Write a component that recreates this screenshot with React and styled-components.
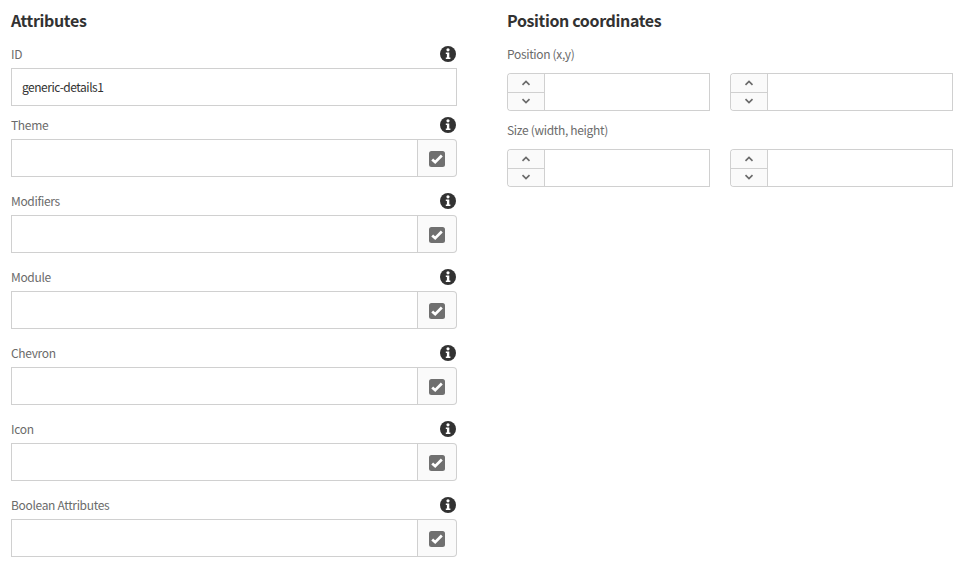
import React from "react";
import styled, { createGlobalStyle } from "styled-components";

const GlobalStyle = createGlobalStyle`
  *, *::before, *::after { box-sizing: border-box; }
  body {
    margin: 0;
    background: #fff;
    color: #323232;
    font-family: "Noto Sans CJK SC", "Open Sans", sans-serif;
    font-size: 12px;
  }
`;

const Page = styled.main`
  display: grid;
  grid-template-columns: 446px 446px;
  column-gap: 50px;
  padding: 10px 13px 0 11px;
`;

const Column = styled.section`
  display: flex;
  flex-direction: column;
`;

const Heading = styled.h3`
  margin: 0 0 16px;
  height: 20px;
  font-size: 16px;
  font-weight: 700;
  line-height: 20px;
  letter-spacing: -0.36px;
  white-space: nowrap;
`;

const Field = styled.div`
  margin-bottom: ${(p) => p.$gap || "16px"};
`;

const LabelRow = styled.div`
  display: flex;
  justify-content: space-between;
  height: 22px;
  padding-right: 1px;
`;

const Label = styled.label`
  height: 15px;
  font-size: 12px;
  line-height: 15px;
  color: #6b6b6b;
  letter-spacing: -0.33px;
  white-space: nowrap;
`;

const InputGroup = styled.div`
  display: flex;
  width: ${(p) => p.$width || "100%"};
  height: 38px;
`;

const TextInput = styled.input`
  flex: 1;
  min-width: 0;
  height: 38px;
  margin: 0;
  padding: 0 10px 1px;
  border: 1px solid #d0d0d0;
  border-radius: 0;
  outline: none;
  background: #fff;
  color: #323232;
  font: inherit;
  letter-spacing: -0.48px;
`;

const Addon = styled.div`
  display: flex;
  align-items: center;
  justify-content: center;
  width: 39px;
  border: 1px solid #d0d0d0;
  border-left: 0;
  border-radius: 0 4px 4px 0;
  background: #fafafa;
`;

const CheckSvg = styled.svg`
  display: block;
  margin-top: 1px;
`;

const InfoSvg = styled.svg`
  display: block;
`;

const Steppers = styled.div`
  display: flex;
  flex-direction: column;
  width: 37px;
  border: 1px solid #d0d0d0;
  border-right: 0;
  border-radius: 4px 0 0 4px;
  overflow: hidden;
`;

const StepButton = styled.button`
  display: flex;
  align-items: center;
  justify-content: center;
  height: ${(p) => (p.$up ? "19px" : "17px")};
  margin: 0;
  padding: ${(p) => (p.$up ? "0" : "0 0 1px")};
  border: 0;
  border-bottom: ${(p) => (p.$up ? "1px solid #d0d0d0" : "0")};
  background: #fafafa;
`;

const SpinnerRow = styled.div`
  display: flex;
  gap: 20px;
  margin-top: 5px;
`;

function InfoIcon() {
  return (
    <InfoSvg width="16" height="16" viewBox="0 0 16 16" aria-hidden="true">
      <circle cx="8" cy="8" r="8" fill="#323232" />
      <circle cx="8" cy="3.8" r="1.6" fill="#fff" />
      <path d="M5.8 6.4h3.5v5.1h1.1V13H5.8v-1.5h1.1V7.9H5.8z" fill="#fff" />
    </InfoSvg>
  );
}

function CheckIcon() {
  return (
    <CheckSvg width="16" height="16" viewBox="0 0 16 16" aria-hidden="true">
      <rect width="16" height="16" rx="2.5" fill="#707070" />
      <path d="M3.2 8.4l3 2.8 6.6-6.7" fill="none" stroke="#fff" strokeWidth="2.7" />
    </CheckSvg>
  );
}

function Chevron({ up }) {
  return (
    <svg width="10" height="6" viewBox="0 0 10 6" aria-hidden="true">
      <path
        d={up ? "M1.5 4.8L5 1.5l3.5 3.3" : "M1.5 1.2L5 4.5l3.5-3.3"}
        fill="none"
        stroke="#6b6b6b"
        strokeWidth="1.7"
      />
    </svg>
  );
}

function AttributeField({ label, value, gap, toggle = true }) {
  return (
    <Field $gap={gap}>
      <LabelRow>
        <Label>{label}</Label>
        <InfoIcon />
      </LabelRow>
      <InputGroup>
        <TextInput type="text" aria-label={label} defaultValue={value} />
        {toggle && (
          <Addon>
            <CheckIcon />
          </Addon>
        )}
      </InputGroup>
    </Field>
  );
}

function NumberSpinner({ width, label }) {
  return (
    <InputGroup $width={width}>
      <Steppers>
        <StepButton $up aria-label="Increase">
          <Chevron up />
        </StepButton>
        <StepButton aria-label="Decrease">
          <Chevron />
        </StepButton>
      </Steppers>
      <TextInput type="text" aria-label={label} />
    </InputGroup>
  );
}

function SpinnerField({ label, names }) {
  return (
    <Field $gap="11px">
      <LabelRow>
        <Label>{label}</Label>
      </LabelRow>
      <SpinnerRow>
        <NumberSpinner width="203px" label={names[0]} />
        <NumberSpinner width="223px" label={names[1]} />
      </SpinnerRow>
    </Field>
  );
}

const attributes = ["Theme", "Modifiers", "Module", "Chevron", "Icon", "Boolean Attributes"];

export default function App() {
  return (
    <>
      <GlobalStyle />
      <Page>
        <Column>
          <Heading>Attributes</Heading>
          <AttributeField label="ID" value="generic-details1" gap="11px" toggle={false} />
          {attributes.map((name) => (
            <AttributeField key={name} label={name} />
          ))}
        </Column>
        <Column>
          <Heading>Position coordinates</Heading>
          <SpinnerField label="Position (x,y)" names={["x", "y"]} />
          <SpinnerField label="Size (width, height)" names={["width", "height"]} />
        </Column>
      </Page>
    </>
  );
}
